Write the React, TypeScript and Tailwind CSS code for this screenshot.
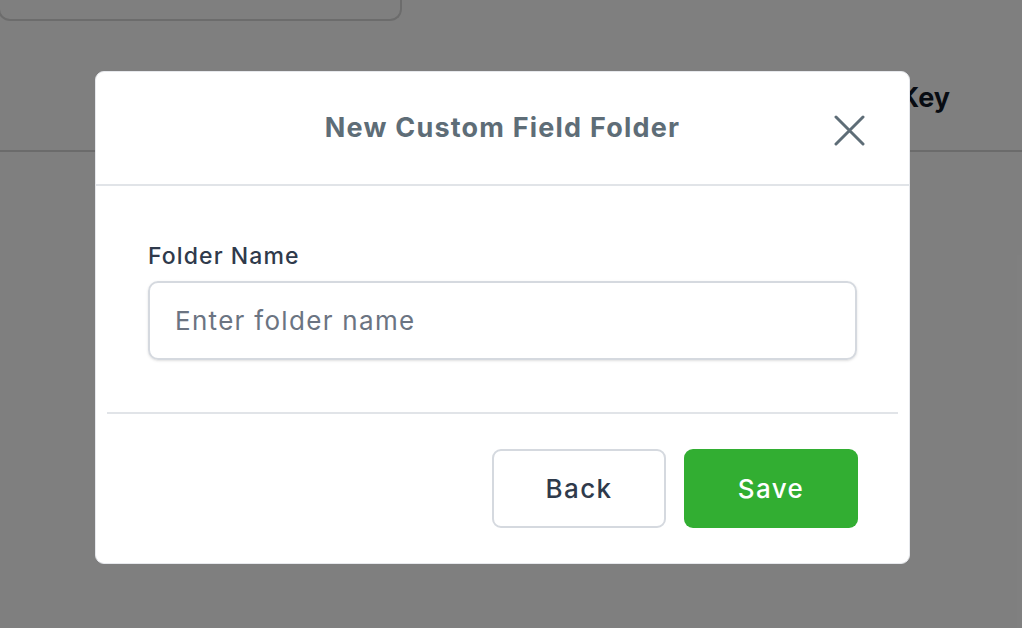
import React from 'react';

const CloseIcon: React.FC = () => (
  <svg width="31" height="31" viewBox="0 0 31 31" fill="none">
    <path d="M2 2L29 29M29 2L2 29" stroke="#5e6d77" strokeWidth="3" strokeLinecap="round" />
  </svg>
);

const App: React.FC = () => {
  return (
    <div className="relative w-[1022px] h-[628px] overflow-hidden bg-white font-['Inter',sans-serif]">
      {/* page behind the overlay */}
      <div className="flex flex-col">
        <div className="w-[404px] h-[21px] -ml-[2px] border-2 border-t-0 border-[#d9d9d9] rounded-b-[12px]"></div>
        <div className="h-[131px] border-b-2 border-[#d6d6d6] flex justify-end items-start pt-[57px] pr-[72px]">
          <span className="text-[27px] font-bold text-[#111827]">Key</span>
        </div>
      </div>

      {/* overlay */}
      <div className="absolute inset-0 bg-black/50"></div>

      {/* modal */}
      <div className="absolute left-[95px] top-[71px] w-[815px] bg-white rounded-[9px] border border-[#e6e8ec] flex flex-col">
        <div className="relative h-[114px] border-b-2 border-[#e1e4e8] flex items-center justify-center">
          <h2 className="text-[27px] font-bold text-[#5e6d77] tracking-[1.2px]">New Custom Field Folder</h2>
          <button className="absolute right-[44px] top-[43px]">
            <CloseIcon />
          </button>
        </div>

        <div className="px-[52px] pt-[56px] pb-[52px] flex flex-col gap-[10px]">
          <label className="text-[23px] leading-[29px] font-medium text-[#2f3a4b] tracking-[1.1px]">Folder Name</label>
          <input
            type="text"
            placeholder="Enter folder name"
            className="h-[79px] w-full rounded-[10px] border-2 border-[#d5d9df] px-[25px] text-[26px] tracking-[1.3px] text-[#2f3a4b] placeholder:text-[#6b7482] shadow-sm outline-none"
          />
        </div>

        <div className="mx-[11px] border-t-2 border-[#e1e4e8]"></div>

        <div className="flex justify-end gap-[18px] pl-[52px] pr-[51px] pt-[35px] pb-[35px]">
          <button className="w-[174px] h-[79px] rounded-[9px] border-2 border-[#d5d9df] bg-white text-[26px] font-medium tracking-[1.4px] text-[#2f3a4b]">
            Back
          </button>
          <button className="w-[174px] h-[79px] rounded-[9px] bg-[#32ae32] text-[26px] font-medium tracking-[1.4px] text-white">
            Save
          </button>
        </div>
      </div>
    </div>
  );
};

export default App;
